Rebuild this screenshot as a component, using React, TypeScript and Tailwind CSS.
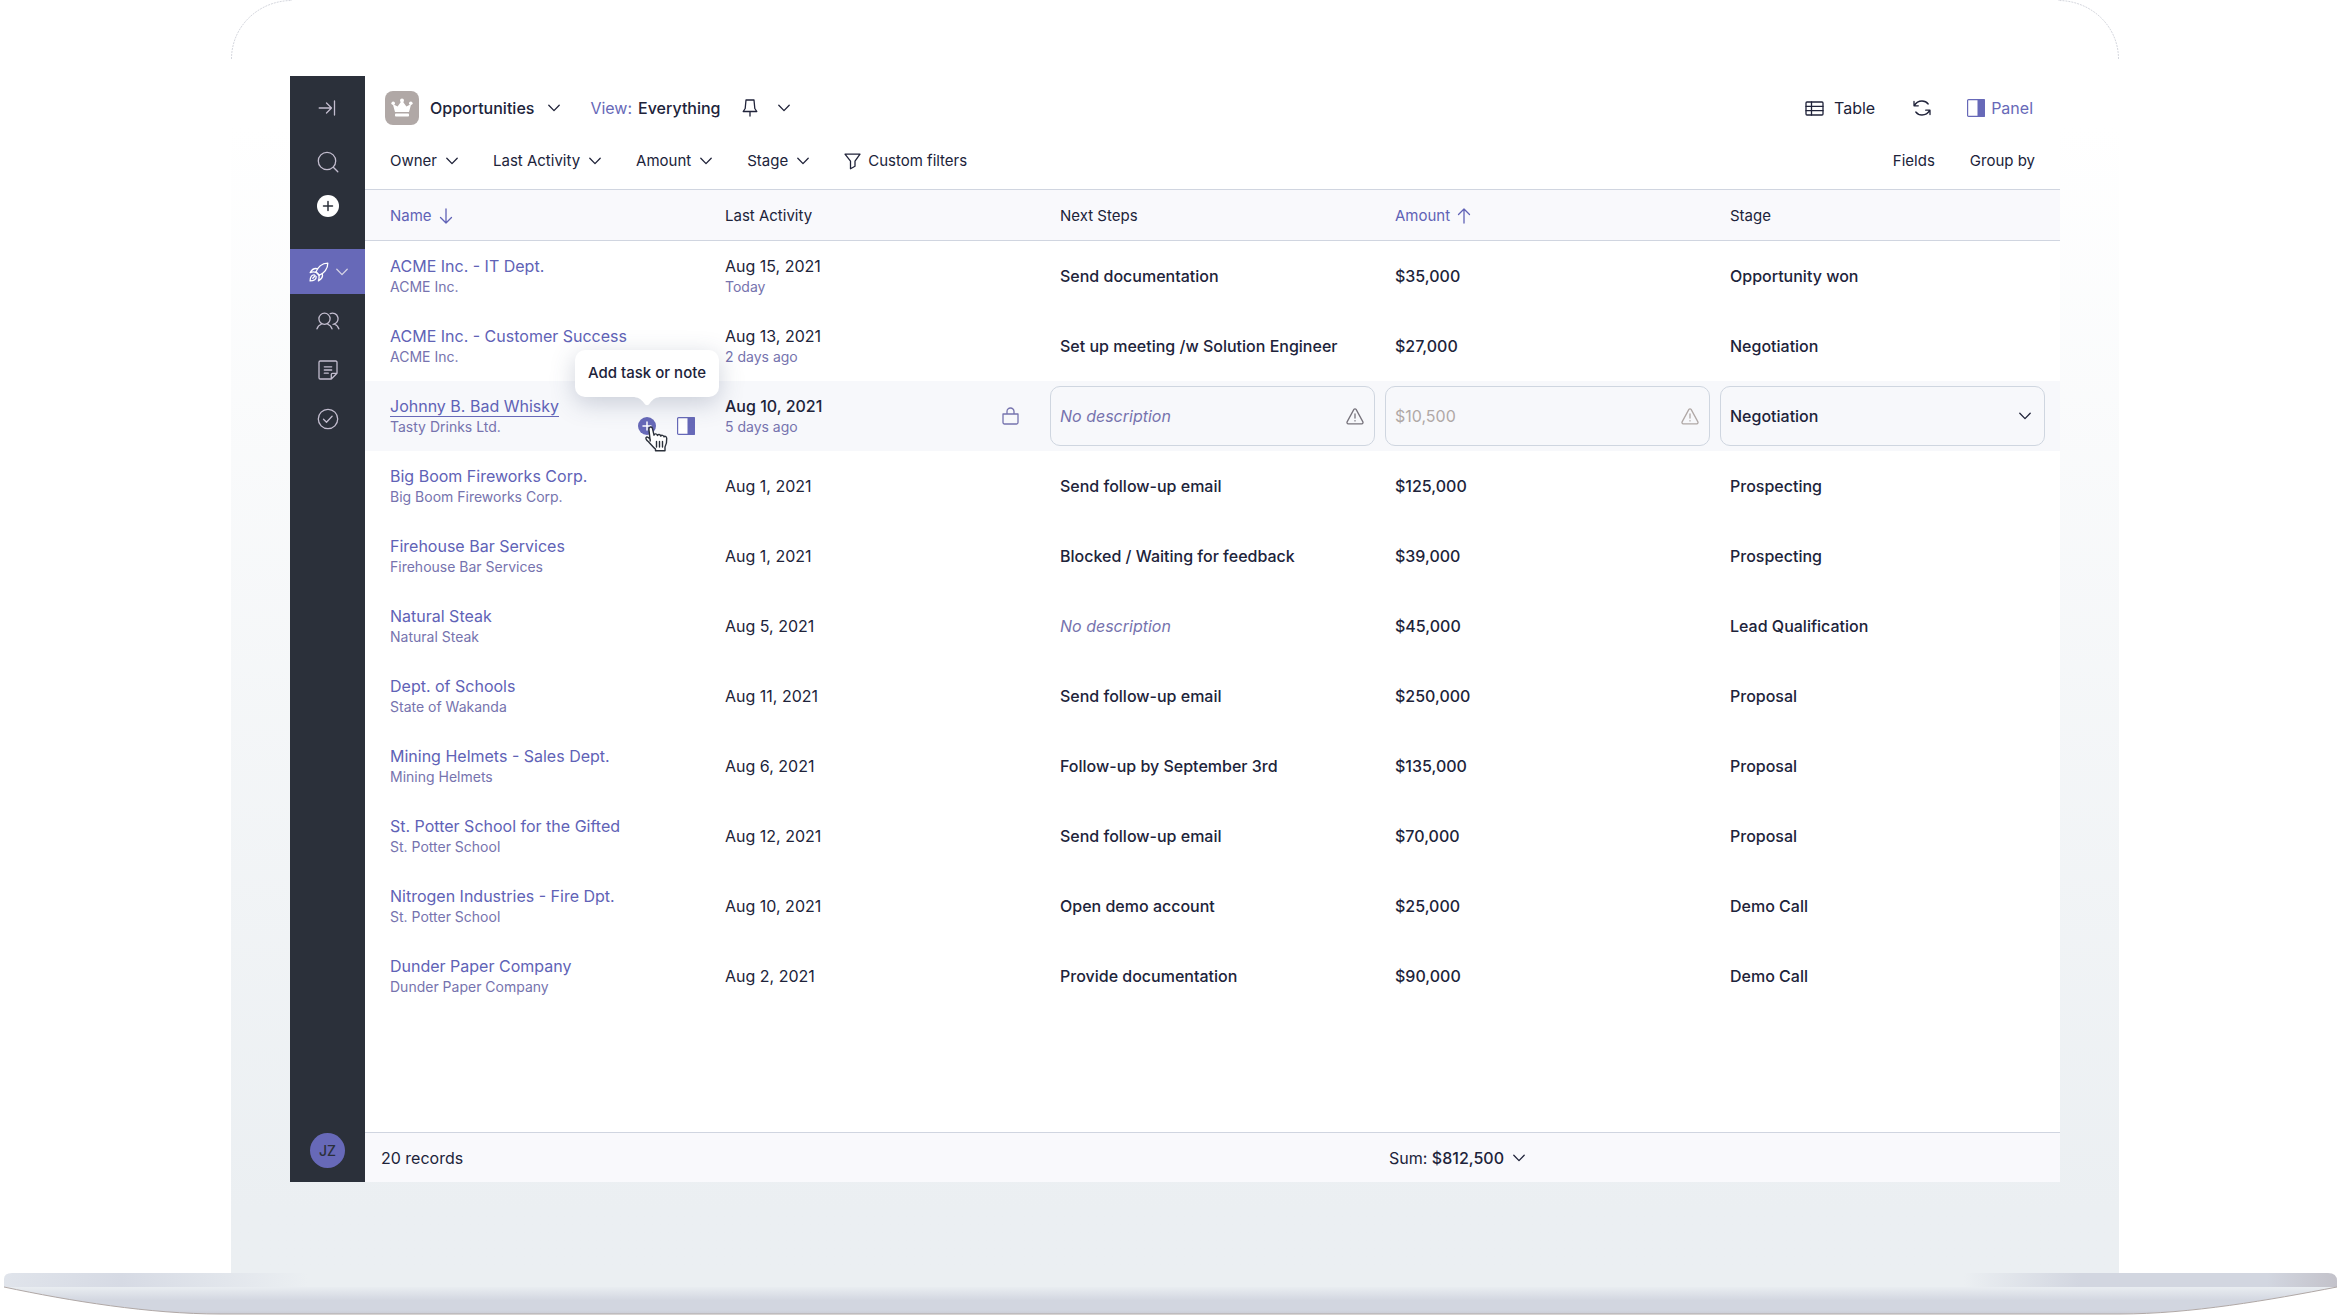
import type { ReactNode } from "react";

type Opportunity = {
  name: string;
  company: string;
  date: string;
  ago?: string;
  next: string;
  amount: string;
  stage: string;
  editing?: boolean;
};

const opportunities: Opportunity[] = [
  { name: "ACME Inc. - IT Dept.", company: "ACME Inc.", date: "Aug 15, 2021", ago: "Today", next: "Send documentation", amount: "$35,000", stage: "Opportunity won" },
  { name: "ACME Inc. - Customer Success", company: "ACME Inc.", date: "Aug 13, 2021", ago: "2 days ago", next: "Set up meeting /w Solution Engineer", amount: "$27,000", stage: "Negotiation" },
  { name: "Johnny B. Bad Whisky", company: "Tasty Drinks Ltd.", date: "Aug 10, 2021", ago: "5 days ago", next: "", amount: "$10,500", stage: "Negotiation", editing: true },
  { name: "Big Boom Fireworks Corp.", company: "Big Boom Fireworks Corp.", date: "Aug 1, 2021", next: "Send follow-up email", amount: "$125,000", stage: "Prospecting" },
  { name: "Firehouse Bar Services", company: "Firehouse Bar Services", date: "Aug 1, 2021", next: "Blocked / Waiting for feedback", amount: "$39,000", stage: "Prospecting" },
  { name: "Natural Steak", company: "Natural Steak", date: "Aug 5, 2021", next: "", amount: "$45,000", stage: "Lead Qualification" },
  { name: "Dept. of Schools", company: "State of Wakanda", date: "Aug 11, 2021", next: "Send follow-up email", amount: "$250,000", stage: "Proposal" },
  { name: "Mining Helmets - Sales Dept.", company: "Mining Helmets", date: "Aug 6, 2021", next: "Follow-up by September 3rd", amount: "$135,000", stage: "Proposal" },
  { name: "St. Potter School for the Gifted", company: "St. Potter School", date: "Aug 12, 2021", next: "Send follow-up email", amount: "$70,000", stage: "Proposal" },
  { name: "Nitrogen Industries - Fire Dpt.", company: "St. Potter School", date: "Aug 10, 2021", next: "Open demo account", amount: "$25,000", stage: "Demo Call" },
  { name: "Dunder Paper Company", company: "Dunder Paper Company", date: "Aug 2, 2021", next: "Provide documentation", amount: "$90,000", stage: "Demo Call" },
];

const stroke = {
  fill: "none",
  stroke: "currentColor",
  strokeWidth: 1.3,
  strokeLinecap: "round",
  strokeLinejoin: "round",
} as const;

function Chevron() {
  return (
    <svg aria-hidden="true" width="12" height="8" viewBox="0 0 12 8" className="shrink-0" {...stroke}>
      <path d="M.8 1.200 6 6.600 11.200 1.200" />
    </svg>
  );
}

function PanelIcon() {
  return (
    <svg aria-hidden="true" width="18" height="18" viewBox="0 0 18 18" className="shrink-0">
      <rect x="0.6" y="0.6" width="16.800" height="16.800" rx="1" fill="white" stroke="currentColor" strokeWidth="1.200" />
      <path d="M10.500 0H17a1 1 0 0 1 1 1v16a1 1 0 0 1-1 1h-6.500z" fill="currentColor" />
    </svg>
  );
}

function Crown() {
  return (
    <svg aria-hidden="true" width="22" height="20" viewBox="0 0 22 20" fill="currentColor">
      <circle cx="2.200" cy="5.200" r="1.800" />
      <circle cx="11" cy="2.400" r="2" />
      <circle cx="19.800" cy="5.200" r="1.800" />
      <path d="M1.800 6 6.600 8.600 10.200 3.400h1.600l3.600 5.200L20.200 6l-2.200 8H4z" />
      <rect x="4" y="15.400" width="14" height="3.200" rx="0.800" />
    </svg>
  );
}

function Warning() {
  return (
    <svg aria-hidden="true" width="18" height="17" viewBox="0 0 18 17" {...stroke}>
      <path d="M7.900 1.400a1.300 1.300 0 0 1 2.200 0l6.800 12.500a1.300 1.300 0 0 1-1.100 1.900H2.200a1.300 1.300 0 0 1-1.100-1.900z" />
      <path d="M9 6v4M9 12.600v.3" />
    </svg>
  );
}

function Hand() {
  return (
    <svg
      aria-hidden="true"
      width="24"
      height="26"
      viewBox="0 0 24 26"
      className="pointer-events-none absolute top-[9px] left-[6px] z-20 text-[#2b303a]"
      fill="white"
      stroke="currentColor"
      strokeWidth="1.400"
      strokeLinejoin="round"
      strokeLinecap="round"
    >
      <path d="M6.200 15 4.900 3.200C4.700 .6 8 .2 8.500 2.700L10 9.200c.4-1.900 3.100-1.700 3.400.3.500-1.600 3-1.400 3.300.6.700-1.300 2.900-1 3.300.8.400-1 2.600-.7 2.700 1.400.2 3.500-.2 6.200-1.700 8.700v3.800h-9.500v-1.700c-2.400-1.800-4.600-4.700-7-7.300-2.100-1.700-3.500-3.800-2-4.700 1.200-.7 2.500.7 3.700 2.200z" />
      <path d="M12.500 15.500v5.500M15.500 15.500v5.500M18.500 15.500v5.500" fill="none" />
    </svg>
  );
}

function NavButton({ label, children }: { label: string; children: ReactNode }) {
  return (
    <button type="button" aria-label={label} className="flex h-[49px] w-full items-center justify-center">
      {children}
    </button>
  );
}

function Sidebar() {
  return (
    <nav aria-label="Main" className="flex w-[75px] shrink-0 flex-col items-center bg-[#2b303a] pb-[14px] text-[#c3bdcf]">
      <button type="button" aria-label="Expand sidebar" className="flex h-16 w-full items-center justify-center pr-[2px]">
        <svg aria-hidden="true" width="18" height="16" viewBox="0 0 18 16" {...stroke}>
          <path d="M1.200 8h12.300M8.500 3l5 5-5 5M16.500 1v14" />
        </svg>
      </button>
      <button type="button" aria-label="Search" className="flex h-11 w-full items-center justify-center">
        <svg aria-hidden="true" width="22" height="22" viewBox="0 0 22 22" {...stroke}>
          <circle cx="10" cy="10" r="8.700" />
          <path d="m16.300 16.300 4.500 4.500" />
        </svg>
      </button>
      <button type="button" aria-label="Create" className="flex h-11 w-full items-center justify-center">
        <svg aria-hidden="true" width="22" height="22" viewBox="0 0 22 22">
          <circle cx="11" cy="11" r="11" fill="#fff" />
          <path d="M11 6.500v9M6.500 11h9" stroke="#2b303a" strokeWidth="1.500" strokeLinecap="round" />
        </svg>
      </button>
      <button
        type="button"
        aria-label="Sales"
        className="mt-[21px] mb-[2px] flex h-[45px] w-full items-center justify-center gap-[7px] pl-[2px] bg-[#6769b8] text-white"
      >
        <svg aria-hidden="true" width="20" height="20" viewBox="0 0 20 20" {...stroke}>
          <path d="M7 10C8.500 6 12.500 1.200 18.800 1.100 18.900 7 15 11.500 10.300 13.200z" />
          <path d="M8.800 6.800C5.500 5.800 3 7.300 1.200 10.600c2-.8 3.800-.8 5.600-.3M13.200 11.400c1 3.200-.6 5.800-3.800 7.500.8-2 .9-3.900.6-5.500" />
          <path d="M5.300 12.800C3 12.600 1.200 14.500 1.100 18.900c4.200 0 6.200-1.800 6.100-4.200M7 10l3.300 3.200M3.800 16.200l2.400-2.400" />
        </svg>
        <span className="text-[#d5d3e4]">
          <Chevron />
        </span>
      </button>
      <NavButton label="Contacts">
        <svg aria-hidden="true" width="24" height="18" viewBox="0 0 24 18" {...stroke}>
          <circle cx="8.500" cy="6.800" r="5.600" />
          <path d="M1 16.800c.7-2.400 2.500-4 4.600-4.800M16 16.800c-.7-2.400-2.500-4-4.600-4.800M14.200 1.600a5.600 5.600 0 1 1 2.900 10.700M18.200 12c2.200.8 3.900 2.400 4.600 4.800" />
        </svg>
      </NavButton>
      <NavButton label="Notes">
        <svg aria-hidden="true" width="20" height="20" viewBox="0 0 20 20" {...stroke}>
          <path d="M2.200 1h15.600A1.200 1.200 0 0 1 19 2.200V13.300L13.300 19H2.200A1.200 1.200 0 0 1 1 17.800V2.200A1.200 1.200 0 0 1 2.200 1zM13.300 19v-4.500a1.200 1.200 0 0 1 1.200-1.200H19M6.300 6.800h7.400M6.300 10h7.400M6.300 13.200h4" />
        </svg>
      </NavButton>
      <NavButton label="Tasks">
        <svg aria-hidden="true" width="22" height="22" viewBox="0 0 22 22" {...stroke}>
          <circle cx="11" cy="11" r="9.700" />
          <path d="m6.500 11.300 3 3 5.600-6" />
        </svg>
      </NavButton>
      <button
        type="button"
        aria-label="Account JZ"
        className="mt-auto flex size-[35px] items-center justify-center rounded-full bg-[#6769b8] text-sm font-medium text-[#2b303a]"
      >
        JZ
      </button>
    </nav>
  );
}

function Filter({ label }: { label: string }) {
  return (
    <button type="button" className="flex items-center gap-[9px]">
      {label}
      <Chevron />
    </button>
  );
}

function Toolbar() {
  return (
    <header className="flex flex-col border-b border-[#d0d5e0] pb-[7px]">
      <div className="flex h-16 items-center pr-[27px] pl-5 text-base">
        <button type="button" className="flex items-center font-medium">
          <span className="mr-[11px] flex size-[34px] items-center justify-center rounded-lg bg-[#b0a8a6] text-white">
            <Crown />
          </span>
          <span className="mr-[14px]">Opportunities</span>
          <Chevron />
        </button>
        <button type="button" className="ml-[30px] flex items-center gap-[6px]">
          <span className="text-[#6769b8]">View:</span>
          <span className="font-medium">Everything</span>
        </button>
        <button type="button" aria-label="Pin view" className="ml-[21px]">
          <svg aria-hidden="true" width="16" height="18" viewBox="0 0 16 18" {...stroke}>
            <path d="M4 1h8l.8 8.500 2 3H1.200l2-3zM8 12.500V17" />
          </svg>
        </button>
        <button type="button" aria-label="View options" className="ml-5">
          <Chevron />
        </button>
        <button type="button" className="ml-auto flex items-center gap-[10px]">
          <svg aria-hidden="true" width="19" height="15" viewBox="0 0 19 15" {...stroke}>
            <rect x="1" y="1" width="17" height="13" rx="1" />
            <path d="M1 5.300h17M1 9.700h17M6.500 1v13" />
          </svg>
          Table
        </button>
        <button type="button" aria-label="Refresh" className="ml-[38px]">
          <svg aria-hidden="true" width="18" height="16" viewBox="0 0 18 16" {...stroke}>
            <path d="M1 1.500v4.300h4.300M1.300 5.600C3 2.600 6 1 9 1c2.600 0 4.700 1 6.200 3M17 14.500v-4.300h-4.300M16.700 10.400C15 13.400 12 15 9 15c-2.600 0-4.700-1-6.200-3" />
          </svg>
        </button>
        <button type="button" className="ml-9 flex items-center gap-[6px] text-[#6769b8]">
          <PanelIcon />
          Panel
        </button>
      </div>
      <div className="flex h-[42px] items-center gap-[35px] pr-[25px] pl-[25px] text-[15px]">
        <Filter label="Owner" />
        <Filter label="Last Activity" />
        <Filter label="Amount" />
        <Filter label="Stage" />
        <button type="button" className="flex items-center gap-[7px]">
          <svg aria-hidden="true" width="17" height="17" viewBox="0 0 17 17" {...stroke}>
            <path d="M1 1.200h15l-5 7v5l-4.500 2.500V8.200z" />
          </svg>
          Custom filters
        </button>
        <button type="button" className="ml-auto">Fields</button>
        <button type="button">Group by</button>
      </div>
    </header>
  );
}

function SortArrow({ up }: { up?: boolean }) {
  return (
    <svg aria-hidden="true" width="14" height="16" viewBox="0 0 14 16" {...stroke}>
      {up ? <path d="M7 15V1M1.500 6.500 7 1l5.500 5.500" /> : <path d="M7 1v14M1.500 9.500 7 15l5.500-5.500" />}
    </svg>
  );
}

function Tooltip() {
  return (
    <span
      role="tooltip"
      className="absolute bottom-[38px] left-1/2 z-10 flex h-[47px] w-[144px] -translate-x-1/2 items-center justify-center rounded-[10px] bg-white text-[15px] font-medium whitespace-nowrap text-[#20233a] shadow-[0_6px_24px_rgba(60,75,110,0.25)]"
    >
      Add task or note
      <svg aria-hidden="true" width="30" height="9" viewBox="0 0 30 9" className="absolute top-full left-1/2 -translate-x-1/2" fill="white">
        <path d="M0 0h30c-6 0-9 2-12 6-2 3-4 3-6 0C9 2 6 0 0 0z" />
      </svg>
    </span>
  );
}

function Row({ item }: { item: Opportunity }) {
  return (
    <tr className={item.editing ? "h-[70px] bg-[#f7f8fb]" : "h-[70px]"}>
      <td className="p-0 pr-[15px] pl-[25px]">
        <div className="flex items-end justify-between">
          <div className="flex flex-col items-start whitespace-nowrap">
            <a
              href="#opportunity"
              className={
                item.editing
                  ? "h-[22px] border-b border-[#6769b8] leading-[22px] text-[#6062b6]"
                  : "h-[22px] leading-[22px] text-[#6062b6]"
              }
            >
              {item.name}
            </a>
            <span className="text-sm leading-5 text-[#7673ae]">{item.company}</span>
          </div>
          {item.editing && (
            <div className="flex items-center gap-[21px] pb-[2px] text-[#6769b8]">
              <div className="relative flex">
                <button type="button" aria-label="Add task or note">
                  <svg aria-hidden="true" width="18" height="18" viewBox="0 0 18 18">
                    <circle cx="9" cy="9" r="9" fill="currentColor" />
                    <path d="M9 5v8M5 9h8" stroke="#fff" strokeWidth="1.500" strokeLinecap="round" />
                  </svg>
                </button>
                <Tooltip />
                <Hand />
              </div>
              <button type="button" aria-label="Open panel">
                <PanelIcon />
              </button>
            </div>
          )}
        </div>
      </td>
      <td className="p-0 pr-[26px] pl-[15px]">
        <div className="flex items-center justify-between">
          <div className="flex flex-col">
            <span className={item.editing ? "leading-[22px] font-medium" : "leading-[22px]"}>{item.date}</span>
            {item.ago && <span className="text-sm leading-5 text-[#7673ae]">{item.ago}</span>}
          </div>
          {item.editing && (
            <svg aria-hidden="true" width="17" height="18" viewBox="0 0 17 18" className="text-[#7673ae]" {...stroke}>
              <path d="M1 7h15v8.500a1.500 1.500 0 0 1-1.500 1.500h-12A1.500 1.500 0 0 1 1 15.500zM5 7V4.500a3.500 3.500 0 0 1 7 0V7" />
            </svg>
          )}
        </div>
      </td>
      {item.editing ? (
        <>
          <td className="px-[5px] py-0">
            <div className="flex h-[60px] items-center rounded-[10px] border border-[#cfd6e0] pr-[10px] pl-[9px]">
              <input
                aria-label="Next steps"
                placeholder="No description"
                className="min-w-0 flex-1 bg-transparent outline-none placeholder:text-[#7673ae] placeholder:italic"
              />
              <span className="text-[#77737c]">
                <Warning />
              </span>
            </div>
          </td>
          <td className="px-[5px] py-0">
            <div className="flex h-[60px] items-center rounded-[10px] border border-[#cfd6e0] pr-[10px] pl-[9px] text-[#b0a8a6]">
              <input aria-label="Amount" defaultValue={item.amount} className="min-w-0 flex-1 bg-transparent outline-none" />
              <Warning />
            </div>
          </td>
          <td className="py-0 pr-[15px] pl-[5px]">
            <div className="relative flex h-[60px] items-center rounded-[10px] border border-[#cfd6e0]">
              <select aria-label="Stage" defaultValue={item.stage} className="h-full w-full appearance-none bg-transparent pl-[9px] font-medium outline-none">
                <option>Prospecting</option>
                <option>Negotiation</option>
                <option>Proposal</option>
              </select>
              <span className="pointer-events-none absolute right-[13px]">
                <Chevron />
              </span>
            </div>
          </td>
        </>
      ) : (
        <>
          <td className={item.next ? "p-0 pl-[15px] font-medium" : "p-0 pl-[15px] text-[#7673ae] italic"}>
            {item.next || "No description"}
          </td>
          <td className="p-0 pl-[15px] font-medium">{item.amount}</td>
          <td className="p-0 pl-[15px] font-medium">{item.stage}</td>
        </>
      )}
    </tr>
  );
}

function OpportunityTable() {
  return (
    <table className="w-full table-fixed border-separate border-spacing-0 text-left text-base">
      <colgroup>
        <col />
        <col className="w-[335px]" />
        <col className="w-[335px]" />
        <col className="w-[335px]" />
        <col />
      </colgroup>
      <thead>
        <tr className="h-[51px] bg-[#f9f9fc] text-[15px]">
          <th scope="col" className="border-b border-[#d0d5e0] p-0 pt-[2px] pl-[25px] font-normal">
            <button type="button" className="flex items-center gap-[7px] text-[#6062b6]">
              Name
              <SortArrow />
            </button>
          </th>
          <th scope="col" className="border-b border-[#d0d5e0] p-0 pt-[2px] pl-[15px] font-normal">Last Activity</th>
          <th scope="col" className="border-b border-[#d0d5e0] p-0 pt-[2px] pl-[15px] font-normal">Next Steps</th>
          <th scope="col" className="border-b border-[#d0d5e0] p-0 pt-[2px] pl-[15px] font-normal">
            <button type="button" className="flex items-center gap-[7px] text-[#6062b6]">
              Amount
              <SortArrow up />
            </button>
          </th>
          <th scope="col" className="border-b border-[#d0d5e0] p-0 pt-[2px] pl-[15px] font-normal">Stage</th>
        </tr>
      </thead>
      <tbody>
        {opportunities.map((item) => (
          <Row key={item.name} item={item} />
        ))}
      </tbody>
    </table>
  );
}

function LidCorner({ right }: { right?: boolean }) {
  return (
    <svg
      aria-hidden="true"
      width="62"
      height="60"
      viewBox="0 0 62 60"
      className={right ? "absolute top-0 right-0 -scale-x-100" : "absolute top-0 left-0"}
    >
      <path d="M.5 59C.5 26 28 .5 61 .5" fill="none" stroke="#d5d7de" strokeWidth="1" strokeDasharray="2 1" />
    </svg>
  );
}

function LaptopBase() {
  return (
    <svg aria-hidden="true" viewBox="0 0 2340 42" preserveAspectRatio="none" className="block h-[42px] w-full shrink-0">
      <defs>
        <linearGradient id="rim" x1="0" x2="1" y1="0" y2="0">
          <stop offset="0" stopColor="#e0e4eb" />
          <stop offset="0.050" stopColor="#d6dae4" />
          <stop offset="0.130" stopColor="#ebeff2" />
          <stop offset="0.840" stopColor="#ebeff2" />
          <stop offset="0.890" stopColor="#d2d6e0" />
          <stop offset="0.970" stopColor="#d2d6e0" />
          <stop offset="1" stopColor="#c3c2ca" />
        </linearGradient>
        <linearGradient id="underside" x1="0" x2="0" y1="0" y2="1">
          <stop offset="0" stopColor="#e9edf1" />
          <stop offset="0.500" stopColor="#d2d6e0" />
          <stop offset="0.850" stopColor="#d2d6e0" />
          <stop offset="1" stopColor="#cbccd5" />
        </linearGradient>
      </defs>
      <path d="M4 14H2337C2270 27 2190 41 2120 41H220C150 41 70 28 4 14z" fill="url(#underside)" />
      <path d="M4 14V6Q4 0 12 0H2328Q2337 0 2337 8V14z" fill="url(#rim)" />
      <path d="M4 14C70 28 150 41 220 41H2120C2190 41 2270 27 2337 14" fill="none" stroke="#b0a8a6" strokeWidth="1" />
    </svg>
  );
}

export default function App() {
  return (
    <div className="flex min-h-screen flex-col bg-white font-['Inter',sans-serif] text-[#20233a]">
      <div className="relative mr-[221px] ml-[231px] flex flex-1 flex-col rounded-t-[60px] bg-linear-to-b from-white from-10% to-[#ebeff2] to-95% px-[59px] pt-[76px] pb-[91px]">
        <LidCorner />
        <LidCorner right />
        <main className="flex flex-1 bg-white">
          <Sidebar />
          <div className="flex min-w-0 flex-1 flex-col">
            <Toolbar />
            <OpportunityTable />
            <footer className="mt-auto grid h-[50px] grid-cols-[1fr_335px_335px_335px_1fr] items-center border-t border-[#d0d5e0] bg-[#f9f9fc] text-base">
              <span className="pl-4">20 records</span>
              <button type="button" className="col-start-4 flex items-center gap-[9px] pl-[9px]">
                <span>
                  Sum: <span className="font-medium">$812,500</span>
                </span>
                <Chevron />
              </button>
            </footer>
          </div>
        </main>
      </div>
      <LaptopBase />
    </div>
  );
}
